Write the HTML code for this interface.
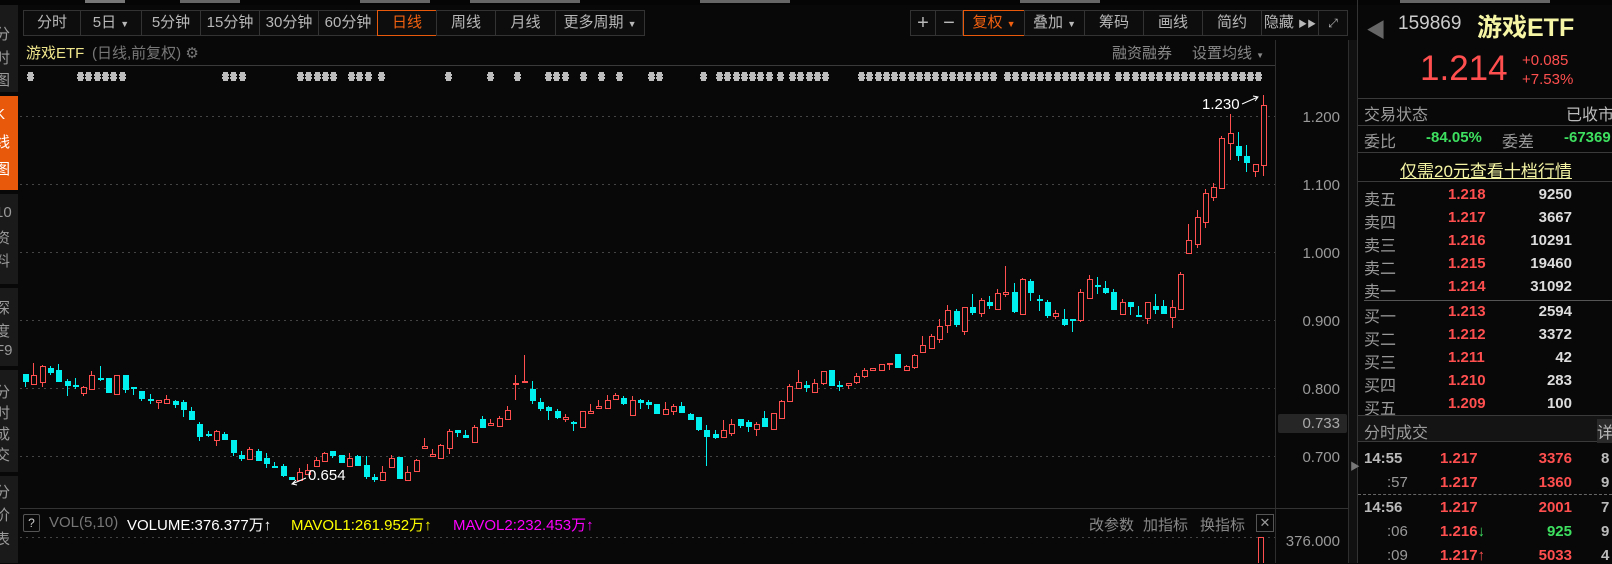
<!DOCTYPE html>
<html><head><meta charset="utf-8">
<style>
*{margin:0;padding:0;box-sizing:border-box}
body{width:1612px;height:563px;background:#080808;overflow:hidden;position:relative;font-family:"Liberation Sans","Noto Sans CJK SC",sans-serif;color:#aaa}
.a{position:absolute;white-space:nowrap}
.tb{position:absolute;top:10px;height:26px;border:1px solid #333;background:#0d0d0d;color:#b8b8b8;font-size:15px;line-height:24px;text-align:center}
.sb{position:absolute;left:0;width:18px;background:#1a1a1a;overflow:hidden}
.sb span{position:absolute;left:-5px;font-size:15px;color:#9a9a9a}
.pl{position:absolute;left:1280px;width:60px;text-align:right;font-size:15px;color:#9a9a9a}
.hl{position:absolute;height:1px;background:#3a3a3a}
.lab{position:absolute;left:1364px;font-size:16px;color:#9a9a9a}
.pr{position:absolute;left:1448px;font-size:15px;font-weight:bold;color:#ff4f4f}
.vo{position:absolute;right:40px;font-size:15px;font-weight:bold;color:#ddd}
</style></head><body>
<div class="a" style="left:0;top:0;width:1612px;height:5px;background:#050505"></div>
<div class="a" style="left:85px;top:0;width:40px;height:3px;background:#777"></div>
<div class="a" style="left:180px;top:0;width:60px;height:3px;background:#666"></div>
<div class="a" style="left:360px;top:0;width:70px;height:3px;background:#666"></div>
<div class="a" style="left:470px;top:0;width:110px;height:3px;background:#666"></div>
<div class="a" style="left:700px;top:0;width:90px;height:3px;background:#666"></div>
<div class="a" style="left:1020px;top:0;width:80px;height:3px;background:#666"></div>
<div class="a" style="left:1400px;top:0;width:150px;height:3px;background:#666"></div>

<div class="sb" style="top:5px;height:87px"><span style="top:18px">分</span><span style="top:42px">时</span><span style="top:64px">图</span></div>
<div class="sb" style="top:96px;height:94px;background:#e8590c"><span style="top:10px;color:#fff">K</span><span style="top:35px;color:#fff">线</span><span style="top:62px;color:#fff">图</span></div>
<div class="sb" style="top:194px;height:90px"><span style="top:10px">10</span><span style="top:33px">资</span><span style="top:56px">料</span></div>
<div class="sb" style="top:288px;height:78px"><span style="top:9px">深</span><span style="top:32px">度</span><span style="top:54px">F9</span></div>
<div class="sb" style="top:370px;height:102px"><span style="top:11px">分</span><span style="top:32px">时</span><span style="top:53px">成</span><span style="top:74px">交</span></div>
<div class="sb" style="top:476px;height:87px"><span style="top:5px">分</span><span style="top:28px">价</span><span style="top:52px">表</span></div>

<div class="tb" style="left:23px;width:58px">分时</div>
<div class="tb" style="left:80px;width:62px">5日 <span style="font-size:9px">▼</span></div>
<div class="tb" style="left:141px;width:60px">5分钟</div>
<div class="tb" style="left:200px;width:60px">15分钟</div>
<div class="tb" style="left:259px;width:60px">30分钟</div>
<div class="tb" style="left:318px;width:60px">60分钟</div>
<div class="tb" style="left:377px;width:60px;border-color:#e8590c;color:#f06010">日线</div>
<div class="tb" style="left:436px;width:60px">周线</div>
<div class="tb" style="left:495px;width:61px">月线</div>
<div class="tb" style="left:555px;width:90px">更多周期 <span style="font-size:9px">▼</span></div>
<div class="tb" style="left:910px;width:26px;font-size:20px">+</div>
<div class="tb" style="left:935px;width:28px;font-size:20px">−</div>
<div class="tb" style="left:963px;width:62px;border-color:#e8590c;color:#f06010">复权 <span style="font-size:9px">▼</span></div>
<div class="tb" style="left:1024px;width:61px">叠加 <span style="font-size:9px">▼</span></div>
<div class="tb" style="left:1084px;width:60px">筹码</div>
<div class="tb" style="left:1143px;width:60px">画线</div>
<div class="tb" style="left:1202px;width:60px">简约</div>
<div class="tb" style="left:1261px;width:58px">隐藏 <span style="font-size:9px">▶▶</span></div>
<div class="tb" style="left:1318px;width:30px;font-size:12px">⤢</div>

<div class="a" style="left:26px;top:42px;font-size:15px;color:#f0e68c">游戏ETF</div>
<div class="a" style="left:92px;top:42px;font-size:15px;color:#777">(日线,前复权) ⚙</div>
<div class="a" style="left:1112px;top:42px;font-size:15px;color:#888">融资融券</div>
<div class="a" style="left:1192px;top:42px;font-size:15px;color:#888">设置均线 <span style="font-size:8px">▼</span></div>
<div class="hl" style="left:20px;top:65px;width:1255px"></div>

<div class="a" style="left:1275px;top:40px;width:1px;height:523px;background:#2e2e2e"></div>
<div class="a" style="left:1348px;top:40px;width:1px;height:523px;background:#2e2e2e"></div>
<div class="a" style="left:1349px;top:40px;width:9px;height:523px;background:#111"></div>
<div class="a" style="left:1357px;top:0;width:1px;height:563px;background:#333"></div>
<div class="a" style="left:1350px;top:458px;font-size:10px;color:#777">▶</div>
<div class="pl" style="top:109px">1.200</div>
<div class="pl" style="top:177px">1.100</div>
<div class="pl" style="top:245px">1.000</div>
<div class="pl" style="top:313px">0.900</div>
<div class="pl" style="top:381px">0.800</div>
<div class="a" style="left:1278px;top:414px;width:69px;height:19px;background:#262626;border-radius:2px"></div>
<div class="pl" style="top:415px;color:#aaa">0.733</div>
<div class="pl" style="top:449px">0.700</div>
<div class="pl" style="top:533px">376.000</div>

<svg class="a" style="left:0;top:0" width="1348" height="563" id="ch">
<g stroke="#444" stroke-dasharray="2,4">
<line x1="20" x2="1275" y1="116.5" y2="116.5"/><line x1="20" x2="1275" y1="184.5" y2="184.5"/>
<line x1="20" x2="1275" y1="252.5" y2="252.5"/><line x1="20" x2="1275" y1="320.5" y2="320.5"/>
<line x1="20" x2="1275" y1="388.5" y2="388.5"/><line x1="20" x2="1275" y1="456.5" y2="456.5"/>
<line x1="20" x2="1275" y1="537.5" y2="537.5"/>
</g>
<line x1="20" x2="1348" y1="508.5" y2="508.5" stroke="#333"/>
<g id="mk" fill="#bdbdbd"></g>
<g id="cd"></g>
<rect x="1258.5" y="537.5" width="5" height="30" fill="none" stroke="#ff4f4f"/>
<path d="M1242 104 L1258 97 M1253 96 L1258 97 L1255 101" stroke="#fff" fill="none" stroke-width="1"/>
<path d="M306 478 L292 484 M296 480 L292 484 L297 485" stroke="#fff" fill="none" stroke-width="1"/>
</svg>
<div class="a" style="left:1202px;top:96px;font-size:15px;color:#fff">1.230</div>
<div class="a" style="left:308px;top:467px;font-size:15px;color:#fff">0.654</div>

<div class="a" style="left:23px;top:514px;width:17px;height:18px;border:1px solid #555;border-radius:2px;font-size:12px;line-height:16px;text-align:center;color:#ccc">?</div>
<div class="a" style="left:49px;top:514px;font-size:15px;color:#777">VOL(5,10)</div>
<div class="a" style="left:127px;top:514px;font-size:15px;color:#fff">VOLUME:376.377万↑</div>
<div class="a" style="left:291px;top:514px;font-size:15px;color:#ffff00">MAVOL1:261.952万↑</div>
<div class="a" style="left:453px;top:514px;font-size:15px;color:#ff00ff">MAVOL2:232.453万↑</div>
<div class="a" style="left:1089px;top:514px;font-size:15px;color:#888">改参数</div>
<div class="a" style="left:1143px;top:514px;font-size:15px;color:#888">加指标</div>
<div class="a" style="left:1200px;top:514px;font-size:15px;color:#888">换指标</div>
<div class="a" style="left:1256px;top:514px;width:18px;height:18px;border:1px solid #555;font-size:13px;line-height:16px;text-align:center;color:#999">✕</div>

<div class="a" style="left:1366px;top:14px;font-size:20px;color:#666">◀</div>
<div class="a" style="left:1398px;top:13px;font-size:19px;color:#ccc">159869</div>
<div class="a" style="left:1477px;top:8px;font-size:25px;font-weight:bold;color:#f5f5a5">游戏ETF</div>
<div class="a" style="left:1420px;top:49px;font-size:35px;color:#ff4f4f">1.214</div>
<div class="a" style="left:1522px;top:52px;font-size:15px;color:#ff4f4f">+0.085</div>
<div class="a" style="left:1522px;top:71px;font-size:15px;color:#ff4f4f">+7.53%</div>
<div class="hl" style="left:1358px;top:98px;width:254px"></div>
<div class="lab" style="top:101px">交易状态</div>
<div class="a" style="left:1566px;top:101px;font-size:16px;color:#bbb">已收市</div>
<div class="hl" style="left:1358px;top:125px;width:254px"></div>
<div class="lab" style="top:128px">委比</div>
<div class="a" style="left:1426px;top:129px;font-size:15px;font-weight:bold;color:#3ee060">-84.05%</div>
<div class="lab" style="left:1502px;top:128px">委差</div>
<div class="a" style="left:1564px;top:129px;font-size:15px;font-weight:bold;color:#3ee060">-67369</div>
<div class="hl" style="left:1358px;top:152px;width:254px"></div>
<div class="a" style="left:1400px;top:157px;font-size:17px;color:#f5f5a5;text-decoration:underline">仅需20元查看十档行情</div>
<div class="hl" style="left:1358px;top:181px;width:254px"></div>

<div class="lab" style="top:186px">卖五</div><div class="pr" style="top:186px">1.218</div><div class="vo" style="top:186px">9250</div>
<div class="lab" style="top:209px">卖四</div><div class="pr" style="top:209px">1.217</div><div class="vo" style="top:209px">3667</div>
<div class="lab" style="top:232px">卖三</div><div class="pr" style="top:232px">1.216</div><div class="vo" style="top:232px">10291</div>
<div class="lab" style="top:255px">卖二</div><div class="pr" style="top:255px">1.215</div><div class="vo" style="top:255px">19460</div>
<div class="lab" style="top:278px">卖一</div><div class="pr" style="top:278px">1.214</div><div class="vo" style="top:278px">31092</div>
<div class="hl" style="left:1364px;top:300px;width:248px;background:#555"></div>
<div class="lab" style="top:303px">买一</div><div class="pr" style="top:303px">1.213</div><div class="vo" style="top:303px">2594</div>
<div class="lab" style="top:326px">买二</div><div class="pr" style="top:326px">1.212</div><div class="vo" style="top:326px">3372</div>
<div class="lab" style="top:349px">买三</div><div class="pr" style="top:349px">1.211</div><div class="vo" style="top:349px">42</div>
<div class="lab" style="top:372px">买四</div><div class="pr" style="top:372px">1.210</div><div class="vo" style="top:372px">283</div>
<div class="lab" style="top:395px">买五</div><div class="pr" style="top:395px">1.209</div><div class="vo" style="top:395px">100</div>
<div class="a" style="left:1358px;top:415px;width:254px;height:27px;background:#141414;border-top:1px solid #3a3a3a;border-bottom:1px solid #3a3a3a"></div>
<div class="lab" style="top:419px">分时成交</div>
<div class="a" style="left:1597px;top:419px;font-size:16px;color:#bbb;background:#2a2a2a">详</div>

<div class="a" style="left:1364px;top:450px;font-size:15px;font-weight:bold;color:#bbb">14:55</div>
<div class="a" style="left:1440px;top:450px;font-size:15px;font-weight:bold;color:#ff4f4f">1.217</div>
<div class="a" style="right:40px;top:450px;font-size:15px;font-weight:bold;color:#ff4f4f">3376</div>
<div class="a" style="left:1601px;top:450px;font-size:15px;font-weight:bold;color:#bbb">8</div>
<div class="a" style="left:1387px;top:474px;font-size:15px;color:#999">:57</div>
<div class="a" style="left:1440px;top:474px;font-size:15px;font-weight:bold;color:#ff4f4f">1.217</div>
<div class="a" style="right:40px;top:474px;font-size:15px;font-weight:bold;color:#ff4f4f">1360</div>
<div class="a" style="left:1601px;top:474px;font-size:15px;font-weight:bold;color:#bbb">9</div>
<div class="a" style="left:1358px;top:494px;width:254px;border-top:1px dashed #666"></div>
<div class="a" style="left:1364px;top:499px;font-size:15px;font-weight:bold;color:#bbb">14:56</div>
<div class="a" style="left:1440px;top:499px;font-size:15px;font-weight:bold;color:#ff4f4f">1.217</div>
<div class="a" style="right:40px;top:499px;font-size:15px;font-weight:bold;color:#ff4f4f">2001</div>
<div class="a" style="left:1601px;top:499px;font-size:15px;font-weight:bold;color:#bbb">7</div>
<div class="a" style="left:1387px;top:523px;font-size:15px;color:#999">:06</div>
<div class="a" style="left:1440px;top:523px;font-size:15px;font-weight:bold;color:#ff4f4f">1.216<span style="color:#3ee060">↓</span></div>
<div class="a" style="right:40px;top:523px;font-size:15px;font-weight:bold;color:#3ee060">925</div>
<div class="a" style="left:1601px;top:523px;font-size:15px;font-weight:bold;color:#bbb">9</div>
<div class="a" style="left:1387px;top:547px;font-size:15px;color:#999">:09</div>
<div class="a" style="left:1440px;top:547px;font-size:15px;font-weight:bold;color:#ff4f4f">1.217↑</div>
<div class="a" style="right:40px;top:547px;font-size:15px;font-weight:bold;color:#ff4f4f">5033</div>
<div class="a" style="left:1601px;top:547px;font-size:15px;font-weight:bold;color:#bbb">4</div>

<script>
var A=[['c',102,122,102,140],['r',105,131,68,131],['r',78,125,75,140],['c',84,96,78,104],['c',90,122,72,122],['c',123,134,117,167],['c',135,139,114,146],['r',141,158,138,167],['r',105,146,93,146],['c',115,118,78,122],['c',114,155,114,155],['r',105,161,105,161],['c',105,146,105,160],['c',141,144,141,166],['c',153,173,153,182],['c',176,179,162,191],['r',181,187,181,206],['r',178,188,165,188],['c',183,191,180,203],['c',186,206,180,230],['c',213,237,201,240],['c',252,287,246,302],['c',281,284,272,292],['r',273,299,271,317],['c',282,296,277,296],['c',300,335,300,347],['c',345,353,333,362],['r',327,356,321,356],['c',333,359,327,359],['c',354,368,338,383],['c',379,382,366,383],['c',378,405,372,410],['c',411,416,411,420],['r',395,420,384,420],['r',390,402,372,402],['r',360,377,350,377],['r',340,362,336,362],['c',334,345,334,353],['c',345,365,345,365],['r',354,377,340,377],['c',349,374,346,378],['c',375,408,348,418],['c',412,418,402,425],['r',396,420,378,420],['r',354,381,345,381],['c',351,413,351,413],['r',396,420,378,420],['r',360,392,358,395],['r',317,323,294,326],['r',343,349,327,352]];
var B=[['r',345,383,342,383],['r',303,353,298,371],['c',300,307,300,320],['c',316,320,300,320],['r',291,335,285,335],['c',267,291,258,293],['r',279,285,267,287],['r',264,287,258,287],['r',240,266,228,266],['r',160,163,135,210],['r',153,157,75,160],['c',177,209,153,221],['c',216,234,204,243],['c',231,240,228,270],['c',243,261,237,266],['r',262,266,252,275],['c',276,280,272,302],['r',244,290,244,290],['r',243,248,222,250],['r',228,233,210,233],['r',210,233,195,233],['r',196,206,189,206],['c',205,218,198,225],['r',210,254,198,254],['c',210,215,207,237],['c',215,222,210,237],['c',222,248,222,248],['r',238,251,216,254],['r',229,242,222,254],['c',228,246,216,249],['c',252,267,249,270],['c',262,296,262,302],['c',300,317,285,408],['c',312,321,300,326],['r',300,320,270,320],['r',283,310,267,317],['c',267,284,267,293],['c',277,288,270,305],['r',283,296,276,317],['c',264,288,243,290],['r',250,296,250,298],['r',213,263,210,263],['r',168,213,162,215],['r',157,173,120,173],['c',165,172,153,186],['r',160,185,148,185],['r',124,158,124,164],['c',120,165,120,165],['c',164,167,153,183],['r',160,166,160,177]];
var M=[['r',376,382,373,384],['r',370,376,368,378]];
var C=[['r',595,600,593,602],['r',583,600,583,600],['r',579,582,579,600],['c',552,590,552,592],['r',589,600,586,600],['r',556,590,552,596],['r',526,545,498,548],['r',499,533,492,533],['r',469,506,447,518],['r',421,464,405,488],['c',423,461,418,470],['r',412,482,412,494],['c',411,425,372,434],['r',391,428,384,440],['c',396,404,378,416],['r',370,416,357,419],['r',366,371,288,380],['c',366,422,339,428],['r',328,431,325,431],['c',333,365,327,392],['c',386,389,375,422],['c',396,434,390,443],['r',430,437,421,446],['c',447,461,417,467],['c',447,450,447,485],['r',367,449,357,455],['r',328,383,316,383],['c',345,348,321,371],['c',354,365,333,371],['c',366,416,357,419],['r',397,431,387,431],['c',396,407,396,434],['c',436,439,408,440],['r',397,443,397,461],['c',408,416,372,431],['c',408,428,390,431],['r',412,440,390,473],['r',313,416,307,416],['r',211,250,162,250],['r',142,223,120,233],['r',70,155,57,173],['r',52,80,40,92]];
var D=[['r',138,188,136,188],['r',133,143,114,160],['c',146,155,132,161],['c',156,162,145,172],['r',164,171,164,177],['r',105,165,95,176]];
var all=[];
A.forEach(function(c){all.push([c[0],340+c[1]/3,340+c[2]/3,340+c[3]/3,340+c[4]/3])});
B.forEach(function(c){all.push([c[0],330+c[1]/3,330+c[2]/3,330+c[3]/3,330+c[4]/3])});
M.forEach(function(c){all.push(c)});
C.forEach(function(c){all.push([c[0],170+c[1]/3,170+c[2]/3,170+c[3]/3,170+c[4]/3])});
D.forEach(function(c){all.push(c)});
var s='',sp=(1263-25)/(all.length-1);
all.forEach(function(c,i){
 var x=Math.round(25+i*sp),col=c[0]=='r'?'#ff4f4f':'#00f0f0';
 var t=Math.round(c[1]),b=Math.round(c[2]);if(b-t<1)b=t+1;
 s+='<line x1="'+(x+0.5)+'" x2="'+(x+0.5)+'" y1="'+Math.round(c[3])+'" y2="'+Math.round(c[4])+'" stroke="'+col+'"/>';
 if(c[0]=='r')s+='<rect x="'+(x-2)+'.5" y="'+t+'.5" width="5" height="'+(b-t)+'" fill="#080808" stroke="'+col+'"/>';
 else s+='<rect x="'+(x-2)+'" y="'+t+'" width="6" height="'+(b-t+1)+'" fill="'+col+'"/>';
});
document.getElementById('cd').innerHTML=s;
var G=[[30,30],[80,96],[105,122],[225,241],[300,335],[351,368],[381,381],[448,448],[490,490],[517,517],[548,571],[583,583],[601,601],[619,619],[651,663],[703,703],[719,768],[780,780],[792,828],[861,997],[1007,1107],[1118,1262]];
var m='';
G.forEach(function(g){for(var x=g[0];x<=g[1]+1;x+=8.25){var xx=Math.round(x);m+='<rect x="'+(xx-2)+'" y="72" width="5" height="9"/><rect x="'+(xx-3)+'" y="74" width="7" height="2"/><rect x="'+(xx-3)+'" y="77" width="7" height="2"/>';}});
document.getElementById('mk').innerHTML=m;
</script>
</body></html>
